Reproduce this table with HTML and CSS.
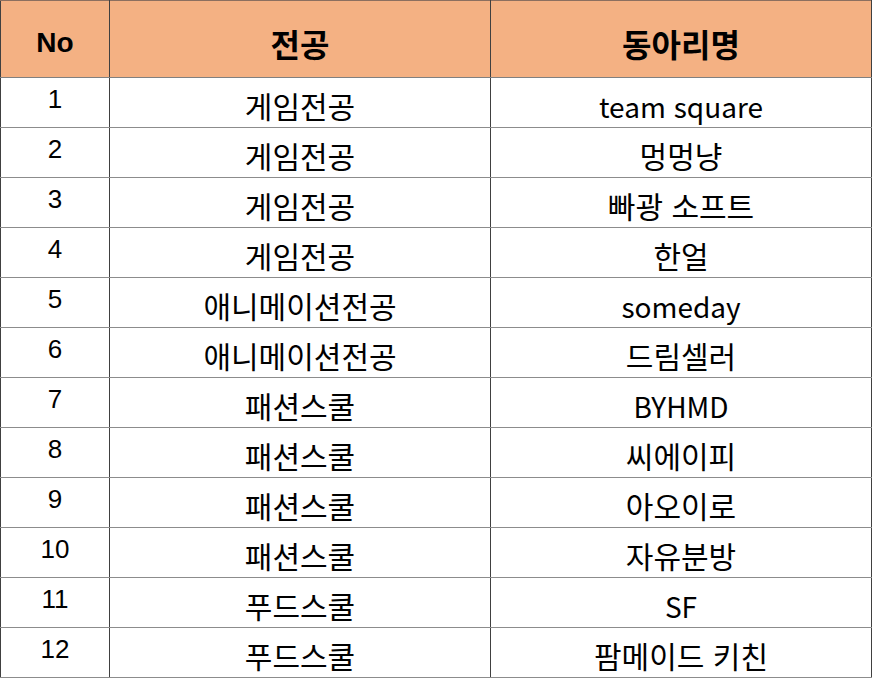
FILE: index.html
```html
<!DOCTYPE html>
<html lang="ko">
<head>
<meta charset="utf-8">
<link rel="stylesheet" href="styles.css">
</head>
<body>
<table class="clubs">
  <colgroup><col class="c-no"><col class="c-major"><col class="c-name"></colgroup>
  <thead>
    <tr><th class="no">No</th><th>전공</th><th>동아리명</th></tr>
  </thead>
  <tbody>
    <tr><td class="no">1</td><td>게임전공</td><td><span class="latin">team square</span></td></tr>
    <tr><td class="no">2</td><td>게임전공</td><td>멍멍냥</td></tr>
    <tr><td class="no">3</td><td>게임전공</td><td>빠광 소프트</td></tr>
    <tr><td class="no">4</td><td>게임전공</td><td>한얼</td></tr>
    <tr><td class="no">5</td><td>애니메이션전공</td><td><span class="latin">someday</span></td></tr>
    <tr><td class="no">6</td><td>애니메이션전공</td><td>드림셀러</td></tr>
    <tr><td class="no">7</td><td>패션스쿨</td><td><span class="latin">BYHMD</span></td></tr>
    <tr><td class="no">8</td><td>패션스쿨</td><td>씨에이피</td></tr>
    <tr><td class="no">9</td><td>패션스쿨</td><td>아오이로</td></tr>
    <tr><td class="no">10</td><td>패션스쿨</td><td>자유분방</td></tr>
    <tr><td class="no">11</td><td>푸드스쿨</td><td><span class="latin">SF</span></td></tr>
    <tr><td class="no">12</td><td>푸드스쿨</td><td>팜메이드 키친</td></tr>
  </tbody>
</table>
</body>
</html>
```

FILE: styles.css
```css
html, body { margin: 0; padding: 0; background: #fff; }
.clubs {
  border-collapse: collapse;
  table-layout: fixed;
  width: 871px;
  font-family: "Noto Sans CJK KR", "Noto Sans", sans-serif;
  color: #000;
}
.c-no { width: 109px; }
.c-major { width: 381px; }
.c-name { width: 381px; }
.clubs th, .clubs td {
  padding: 0;
  text-align: center;
  vertical-align: middle;
  line-height: 1;
  border-left: 1px solid #404040;
  border-right: 1px solid #404040;
}
.clubs thead tr { height: 77px; }
.clubs tbody tr { height: 50px; }
.clubs thead th {
  background: #F4B183;
  font-weight: 700;
  font-size: 32px;
  padding-top: 8px;
  border-top: 1px solid #8c6f5f;
  border-bottom: 1px solid #808080;
}
.clubs tbody td {
  font-size: 30px;
  padding-top: 4px;
  border-bottom: 1px solid #8c8c8c;
}
.clubs .latin { font-size: 28px; }
.clubs td.no, .clubs th.no {
  font-family: "Liberation Sans", Arial, sans-serif;
  font-size: 26px;
}
.clubs tbody td.no { padding-top: 0; padding-bottom: 7px; }
.clubs thead th.no { font-size: 28px; }
```
